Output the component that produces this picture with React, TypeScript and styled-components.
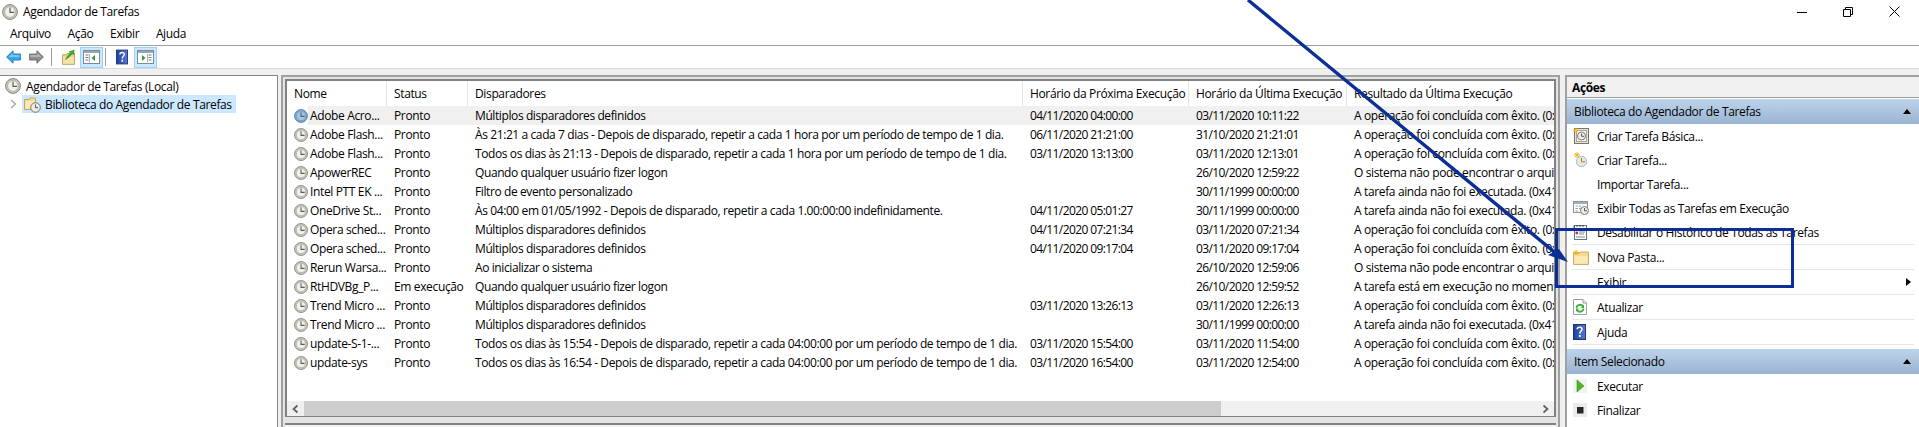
import React from "react";
import styled, { createGlobalStyle } from "styled-components";

const Global = createGlobalStyle`
  html, body { margin: 0; padding: 0; background: #fff; overflow: hidden; }
  * { box-sizing: border-box; }
`;

const Root = styled.div`
  position: relative;
  width: 1919px;
  height: 427px;
  overflow: hidden;
  background: #fff;
  color: #000;
  font-family: "Open Sans", "Noto Sans", sans-serif;
  font-size: 12px;
  letter-spacing: -0.36px;
  display: flex;
  flex-direction: column;
`;

const TitleBar = styled.div`
  height: 23px;
  flex: none;
  display: flex;
  align-items: center;
  padding-left: 2px;
  gap: 5px;
`;
const TitleText = styled.span`
  flex: 1;
  line-height: 23px;
`;
const WinButtons = styled.div`
  display: flex;
  align-items: center;
  padding-right: 19px;
  gap: 36px;
`;
const MenuBar = styled.div`
  height: 23px;
  flex: none;
  display: flex;
  align-items: center;
  padding-left: 10px;
  gap: 16.7px;
  border-bottom: 1px solid #a0a0a0;
`;
const MenuItem = styled.span`
  line-height: 20px;
`;
const Toolbar = styled.div`
  height: 23px;
  flex: none;
  display: flex;
  align-items: center;
  padding-left: 5px;
  border-bottom: 1px solid #d9d9d9;
`;
const ToolIcon = styled.div<{ $w: number; $on?: boolean; $ml?: number }>`
  width: ${(p) => p.$w}px;
  height: 21px;
  margin-left: ${(p) => p.$ml ?? 0}px;
  display: flex;
  align-items: center;
  justify-content: center;
  background: ${(p) => (p.$on ? "#cce8ff" : "transparent")};
  border: 1px solid ${(p) => (p.$on ? "#99d1ff" : "transparent")};
`;
const ToolSep = styled.div<{ $ml: number; $mr: number }>`
  width: 1px;
  height: 18px;
  background: #a0a0a0;
  margin: 0 ${(p) => p.$mr}px 0 ${(p) => p.$ml}px;
`;

const Workspace = styled.div`
  flex: 1;
  min-height: 0;
  display: flex;
  padding-top: 6px;
  background: #f0f0f0;
`;

const TreePanel = styled.div`
  width: 278px;
  flex: none;
  background: #fff;
  border: 1px solid #828790;
  border-left: 0;
  border-bottom: 0;
  padding-top: 1px;
`;
const TreeRoot = styled.div`
  height: 18px;
  display: flex;
  align-items: center;
  padding-left: 5px;
  gap: 5px;
`;
const TreeChild = styled.div`
  display: flex;
  align-items: center;
`;
const Chevron = styled.div`
  width: 22px;
  display: flex;
  justify-content: center;
  padding-left: 4px;
`;
const TreeSelected = styled.div`
  width: 214px;
  height: 18px;
  background: #cce8ff;
  display: flex;
  align-items: center;
  padding-left: 2px;
  gap: 4px;
`;

const CenterFrame = styled.div`
  margin-left: 3px;
  width: 279px;
  flex: 1;
  min-width: 0;
  border: solid #a0a0a0;
  border-width: 2px 2px 0 2px;
  padding: 2px 2px 0 2px;
  background: #e4e4e4;
  display: flex;
  flex-direction: column;
  gap: 6px;
`;
const ListPane = styled.div`
  height: 338px;
  flex: none;
  background: #fff;
  border: 2px solid #828282;
  border-bottom-width: 1px;
  display: flex;
  flex-direction: column;
`;
const DetailPane = styled.div`
  flex: 1;
  background: #f4f4f4;
  border-top: 2px solid #828282;
`;
const Cols = "100px 81px 555px 166px 158px 1fr";
const HeaderRow = styled.div`
  height: 25px;
  flex: none;
  display: grid;
  grid-template-columns: ${Cols};
`;
const HeaderCell = styled.div`
  padding-left: 7px;
  line-height: 25px;
  white-space: nowrap;
  overflow: hidden;
  border-right: 1px solid #e5e5e5;
  &:last-child { border-right: 0; }
`;
const Rows = styled.div`
  flex: 1;
  min-height: 0;
`;
const Row = styled.div<{ $selected?: boolean }>`
  height: 19px;
  display: grid;
  grid-template-columns: ${Cols};
  background: ${(p) => (p.$selected ? "linear-gradient(to right, #fff 21px, #f0f0f0 21px)" : "#fff")};
`;
const NameCell = styled.div`
  display: flex;
  align-items: center;
  padding-left: 7px;
  gap: 2px;
  white-space: nowrap;
  line-height: 19px;
`;
const Cell = styled.div<{ $spacing?: number }>`
  padding-left: 7px;
  white-space: nowrap;
  overflow: hidden;
  line-height: 19px;
  letter-spacing: ${(p) => p.$spacing ?? -0.36}px;
`;
const HScroll = styled.div`
  height: 15px;
  flex: none;
  display: flex;
  align-items: stretch;
  background: #f0f0f0;
`;
const ScrollBtn = styled.div`
  width: 17px;
  flex: none;
  display: flex;
  align-items: center;
  justify-content: center;
`;
const ScrollThumb = styled.div`
  width: 917px;
  flex: none;
  background: #cdcdcd;
`;
const ScrollTrack = styled.div`
  flex: 1;
`;

const ActionsPanel = styled.div`
  width: 354px;
  margin-left: 5px;
  flex: none;
  background: #fff;
  border: solid #a0a0a0;
  border-width: 2px 0 0 2px;
`;
const ActionsHead = styled.div`
  height: 21px;
  padding-left: 5px;
  background: #f0f0f0;
  border-bottom: 1px solid #a0a0a0;
  font-weight: 700;
  line-height: 21px;
`;
const Section = styled.div<{ $mt: number }>`
  height: 25px;
  margin-top: ${(p) => p.$mt}px;
  padding: 0 8px 0 7px;
  display: flex;
  align-items: center;
  justify-content: space-between;
  background: linear-gradient(to bottom, #bdd4ea, #9ab3d2);
`;
const SectionArrow = styled.div`
  width: 0;
  height: 0;
  border-left: 4.5px solid transparent;
  border-right: 4.5px solid transparent;
  border-bottom: 5px solid #000;
`;
const Action = styled.div<{ $sep?: boolean }>`
  height: ${(p) => (p.$sep ? 25 : 24)}px;
  margin: 0 5px;
  padding: 0 0 0 1px;
  display: flex;
  align-items: center;
  border-bottom: ${(p) => (p.$sep ? "1px solid #e6e6e6" : "0")};
`;
const ActionIcon = styled.div`
  width: 24px;
  flex: none;
  display: flex;
  align-items: center;
`;
const ActionLabel = styled.span`
  flex: 1;
  white-space: nowrap;
`;
const SubArrow = styled.div`
  width: 0;
  height: 0;
  margin-right: 3px;
  border-top: 4.5px solid transparent;
  border-bottom: 4.5px solid transparent;
  border-left: 5px solid #000;
`;

const Mark = styled.div`
  position: absolute;
  left: 1555px;
  top: 228px;
  width: 239px;
  height: 60px;
  border: 3px solid #0b2f95;
  pointer-events: none;
`;
const ArrowLayer = styled.svg`
  position: absolute;
  left: 0;
  top: 0;
  pointer-events: none;
`;

const Clock = ({ size = 14, blue = false }: { size?: number; blue?: boolean }) => (
  <svg width={size} height={size} viewBox="0 0 16 16" style={{ flex: "none" }}>
    <circle cx="8" cy="8" r="7.4" fill={blue ? "#7ea6cb" : "#c9c7c0"} stroke={blue ? "#5a83a8" : "#85847f"} strokeWidth="1" />
    <circle cx="8" cy="8" r="5.4" fill={blue ? "#a7c4de" : "#f2f0ea"} stroke={blue ? "#6f97bc" : "#a5a39b"} strokeWidth="0.7" />
    <path d="M8 3.6V8.4H12.2" fill="none" stroke={blue ? "#3f668b" : "#5e5d58"} strokeWidth="1.2" />
  </svg>
);

const NavArrow = ({ color, edge, dir }: { color: string; edge: string; dir: "l" | "r" }) => (
  <svg width="17" height="16" viewBox="0 0 17 16" style={dir === "r" ? { transform: "scaleX(-1)" } : undefined}>
    <path d="M0.7 8L8 1V4.6H16.3V11.4H8V15Z" fill={color} stroke={edge} strokeWidth="1" />
    <path d="M3 8L7.5 3.6V5.6H15.4V8Z" fill="#fff" opacity="0.35" />
  </svg>
);

const FolderUp = () => (
  <svg width="15" height="18" viewBox="0 0 15 18">
    <path d="M0.5 6.5H5L6 5H14.5V17.5H0.5Z" fill="#eed58f" stroke="#b49a5b" />
    <path d="M1.5 9H13.5V16.5H1.5Z" fill="#f7e3a8" />
    <path d="M4 12C6 8 8 6 10 4.5L8.3 3L14 1L13.7 6.5L12 5.2C10 7.5 7.5 10 4 12Z" fill="#3fae2a" stroke="#2a8a1b" strokeWidth="0.6" />
  </svg>
);

const PaneIcon = ({ dark, side }: { dark: string; side: "l" | "r" }) => (
  <svg width="17" height="14" viewBox="0 0 17 14">
    <rect x="0.5" y="0.5" width="16" height="13" fill="#fff" stroke="#7f8a96" />
    <rect x="1" y="1" width="15" height="2" fill="#9aa5b1" />
    {side === "l" ? (
      <>
        <path d="M2.5 5H5.5M2.5 7.5H5.5M2.5 10H5.5" stroke="#6b7785" />
        <path d="M12 5V11L8.5 8Z" fill={dark} />
      </>
    ) : (
      <>
        <path d="M11.5 5H14.5M11.5 7.5H14.5M11.5 10H14.5" stroke="#6b7785" />
        <path d="M5 5V11L8.5 8Z" fill={dark} />
      </>
    )}
    <path d={side === "l" ? "M6.5 4V12.5" : "M10.5 4V12.5"} stroke="#aab2bb" />
  </svg>
);

const HelpBook = ({ w = 13, h = 16 }: { w?: number; h?: number }) => (
  <svg width={w} height={h} viewBox="0 0 13 16">
    <defs>
      <linearGradient id="hb" x1="0" y1="0" x2="1" y2="0">
        <stop offset="0" stopColor="#1d3f9c" />
        <stop offset="1" stopColor="#5a78cf" />
      </linearGradient>
    </defs>
    <rect x="0.5" y="0.5" width="12" height="15" fill="url(#hb)" stroke="#1c3480" />
    <path d="M4.2 5.2C4.2 2.6 9 2.4 9 5.2C9 7 6.9 7.2 6.8 9.6" fill="none" stroke="#fff" strokeWidth="1.5" />
    <rect x="5.9" y="11" width="1.8" height="2" fill="#fff" />
  </svg>
);

const RootFolder = () => (
  <svg width="17" height="17" viewBox="0 0 17 17" style={{ flex: "none" }}>
    <path d="M0.5 3.5H5L6 2H11.5V13.5H0.5Z" fill="#f5dc96" stroke="#c2a765" />
    <path d="M1.5 5H10.5V12.5H1.5Z" fill="#fbeab5" />
    <circle cx="11.5" cy="11.5" r="4.8" fill="#eceae3" stroke="#77766f" />
    <path d="M11.5 8.5V11.7H14" fill="none" stroke="#55544f" />
  </svg>
);

const StarClockPage = () => (
  <svg width="16" height="16" viewBox="0 0 16 16">
    <rect x="1.5" y="0.5" width="14" height="15" fill="#e9e3d3" stroke="#7a7368" />
    <rect x="3.5" y="2.5" width="10" height="11" fill="#fafafa" stroke="#a8a297" />
    <circle cx="8.5" cy="8" r="4" fill="#f2f0ea" stroke="#7d7c76" />
    <path d="M8.5 5.5V8.3H11" fill="none" stroke="#55544f" />
    <path d="M0 2.5H6M3 0V5M1 0.5L5 4.5M5 0.5L1 4.5" stroke="#f3b418" />
  </svg>
);

const StarClock = () => (
  <svg width="16" height="16" viewBox="0 0 16 16">
    <circle cx="8.5" cy="9.5" r="5.2" fill="#e9e7df" stroke="#a0bcd8" />
    <path d="M8.5 6V9.8H12" fill="none" stroke="#b47a2a" />
    <path d="M1 3H7M4 0V6M2 1L6 5M6 1L2 5" stroke="#f3b418" />
  </svg>
);

const ListClock = () => (
  <svg width="16" height="14" viewBox="0 0 16 14">
    <rect x="0.5" y="0.5" width="14" height="11" fill="#fff" stroke="#8b96a3" />
    <rect x="1" y="1" width="13" height="2" fill="#a4aebb" />
    <path d="M2.5 5H5M6 5H8M2.5 7.5H5M6 7.5H8M2.5 10H5" stroke="#98a1ac" />
    <circle cx="11.5" cy="9.5" r="4" fill="#ecebe4" stroke="#7d7c76" />
    <path d="M11.5 7V9.8H14" fill="none" stroke="#55544f" />
  </svg>
);

const HistoryIcon = () => (
  <svg width="14" height="16" viewBox="0 0 14 16">
    <rect x="1.5" y="1.5" width="12" height="14" fill="#fff" stroke="#67727f" />
    <path d="M1 1.5V4M4 1V3M7 1V3M10 1V3" stroke="#3c4752" />
    <path d="M3 5H11M6 8H12M6 10H11M3 13H12" stroke="#7a8794" />
    <circle cx="3.8" cy="9" r="1.4" fill="#d62828" />
  </svg>
);

const NewFolder = () => (
  <svg width="16" height="15" viewBox="0 0 16 15">
    <path d="M0.5 3.5H5.5L7 2H15.5V14.5H0.5Z" fill="#f3d993" stroke="#c9ae6c" />
    <path d="M1.5 6H14.5V13.5H1.5Z" fill="#fbe9b3" />
    <path d="M0 2.5H6M3 0V5M1 0.5L5 4.5M5 0.5L1 4.5" stroke="#f5b312" />
  </svg>
);

const RefreshPage = () => (
  <svg width="14" height="16" viewBox="0 0 14 16">
    <path d="M0.5 0.5H10L13.5 4V15.5H0.5Z" fill="#fff" stroke="#9aa0a6" />
    <path d="M10 0.5V4H13.5" fill="#e8e8e8" stroke="#9aa0a6" />
    <path d="M3.5 9A3.5 3.5 0 0 1 10 7.5M10.5 9.5A3.5 3.5 0 0 1 4 11" fill="none" stroke="#3dae3a" strokeWidth="1.8" />
    <path d="M11 5.5V9H7.8ZM3 12.8V9.5H6.2Z" fill="#3dae3a" />
  </svg>
);

const PlayIcon = () => (
  <svg width="14" height="14" viewBox="0 0 14 14">
    <rect width="14" height="14" fill="#f2f2f2" />
    <path d="M4 1V13L11 7Z" fill="#4fb81f" stroke="#3a9415" strokeWidth="0.6" />
  </svg>
);

const StopIcon = () => (
  <svg width="14" height="14" viewBox="0 0 14 14">
    <rect width="14" height="14" fill="#ececec" />
    <rect x="4" y="4" width="6.5" height="6.5" fill="#262626" />
  </svg>
);

const Small = ({ d }: { d: string }) => (
  <svg width="9" height="10" viewBox="0 0 9 10">
    <path d={d} fill="none" stroke="#606060" strokeWidth="1.7" />
  </svg>
);

const OK = "A operação foi concluída com êxito. (0x0)";
const NF = "O sistema não pode encontrar o arquivo especificado. (0x80070002)";
const NR = "A tarefa ainda não foi executada. (0x41303)";
const RN = "A tarefa está em execução no momento. (0x41301)";
const MULTI = "Múltiplos disparadores definidos";
const LOGON = "Quando qualquer usuário fizer logon";

const tasks: string[][] = [
  ["Adobe Acro...", "Pronto", MULTI, "04/11/2020 04:00:00", "03/11/2020 10:11:22", OK],
  ["Adobe Flash...", "Pronto", "Às 21:21 a cada 7 dias - Depois de disparado, repetir a cada 1 hora por um período de tempo de 1 dia.", "06/11/2020 21:21:00", "31/10/2020 21:21:01", OK],
  ["Adobe Flash...", "Pronto", "Todos os dias às 21:13 - Depois de disparado, repetir a cada 1 hora por um período de tempo de 1 dia.", "03/11/2020 13:13:00", "03/11/2020 12:13:01", OK],
  ["ApowerREC", "Pronto", LOGON, "", "26/10/2020 12:59:22", NF],
  ["Intel PTT EK ...", "Pronto", "Filtro de evento personalizado", "", "30/11/1999 00:00:00", NR],
  ["OneDrive St...", "Pronto", "Às 04:00 em 01/05/1992 - Depois de disparado, repetir a cada 1.00:00:00 indefinidamente.", "04/11/2020 05:01:27", "30/11/1999 00:00:00", NR],
  ["Opera sched...", "Pronto", MULTI, "04/11/2020 07:21:34", "03/11/2020 07:21:34", OK],
  ["Opera sched...", "Pronto", MULTI, "04/11/2020 09:17:04", "03/11/2020 09:17:04", OK],
  ["Rerun Warsa...", "Pronto", "Ao inicializar o sistema", "", "26/10/2020 12:59:06", NF],
  ["RtHDVBg_P...", "Em execução", LOGON, "", "26/10/2020 12:59:52", RN],
  ["Trend Micro ...", "Pronto", MULTI, "03/11/2020 13:26:13", "03/11/2020 12:26:13", OK],
  ["Trend Micro ...", "Pronto", MULTI, "", "30/11/1999 00:00:00", NR],
  ["update-S-1-...", "Pronto", "Todos os dias às 15:54 - Depois de disparado, repetir a cada 04:00:00 por um período de tempo de 1 dia.", "03/11/2020 15:54:00", "03/11/2020 11:54:00", OK],
  ["update-sys", "Pronto", "Todos os dias às 16:54 - Depois de disparado, repetir a cada 04:00:00 por um período de tempo de 1 dia.", "03/11/2020 16:54:00", "03/11/2020 12:54:00", OK],
];

const heads = ["Nome", "Status", "Disparadores", "Horário da Próxima Execução", "Horário da Última Execução", "Resultado da Última Execução"];

const spacingFor = (col: number) => (col === 1 ? -0.4 : col === 2 || col === 3 ? -0.6 : -0.36);

export default function App() {
  return (
    <Root>
      <Global />
      <TitleBar>
        <Clock size={16} />
        <TitleText>Agendador de Tarefas</TitleText>
        <WinButtons>
          <svg width="10" height="10" viewBox="0 0 10 10"><path d="M0 5.5H10" stroke="#000" /></svg>
          <svg width="10" height="10" viewBox="0 0 10 10"><path d="M2.5 2.5V0.5H9.5V7.5H7.5M0.5 2.5H7.5V9.5H0.5Z" fill="none" stroke="#000" /></svg>
          <svg width="11" height="11" viewBox="0 0 11 11"><path d="M0.5 0.5L10.5 10.5M10.5 0.5L0.5 10.5" stroke="#000" /></svg>
        </WinButtons>
      </TitleBar>
      <MenuBar>
        <MenuItem>Arquivo</MenuItem>
        <MenuItem>Ação</MenuItem>
        <MenuItem>Exibir</MenuItem>
        <MenuItem>Ajuda</MenuItem>
      </MenuBar>
      <Toolbar>
        <ToolIcon $w={17}><NavArrow dir="l" color="#3aa6ec" edge="#1a74b8" /></ToolIcon>
        <ToolIcon $w={17} $ml={6}><NavArrow dir="r" color="#8e8e8e" edge="#666" /></ToolIcon>
        <ToolSep $ml={6} $mr={9} />
        <ToolIcon $w={15}><FolderUp /></ToolIcon>
        <ToolIcon $w={23} $on $ml={4}><PaneIcon side="l" dark="#2f9e35" /></ToolIcon>
        <ToolSep $ml={2} $mr={9} />
        <ToolIcon $w={14}><HelpBook /></ToolIcon>
        <ToolIcon $w={23} $on $ml={5}><PaneIcon side="r" dark="#2f9e35" /></ToolIcon>
      </Toolbar>
      <Workspace>
        <TreePanel>
          <TreeRoot>
            <Clock size={16} />
            <span>Agendador de Tarefas (Local)</span>
          </TreeRoot>
          <TreeChild>
            <Chevron>
              <svg width="7" height="10" viewBox="0 0 7 10"><path d="M1 1L5.5 5L1 9" fill="none" stroke="#a6a6a6" strokeWidth="1.4" /></svg>
            </Chevron>
            <TreeSelected>
              <RootFolder />
              <span>Biblioteca do Agendador de Tarefas</span>
            </TreeSelected>
          </TreeChild>
        </TreePanel>
        <CenterFrame>
          <ListPane>
            <HeaderRow>
              {heads.map((h) => (
                <HeaderCell key={h}>{h}</HeaderCell>
              ))}
            </HeaderRow>
            <Rows>
              {tasks.map((t, i) => (
                <Row key={i} $selected={i === 0}>
                  <NameCell>
                    <Clock size={14} blue={i === 0} />
                    <span>{t[0]}</span>
                  </NameCell>
                  {t.slice(1).map((c, j) => (
                    <Cell key={j} $spacing={spacingFor(j)}>{c}</Cell>
                  ))}
                </Row>
              ))}
            </Rows>
            <HScroll>
              <ScrollBtn><Small d="M6.5 1.5L2.5 5L6.5 8.5" /></ScrollBtn>
              <ScrollThumb />
              <ScrollTrack />
              <ScrollBtn><Small d="M2.5 1.5L6.5 5L2.5 8.5" /></ScrollBtn>
            </HScroll>
          </ListPane>
          <DetailPane />
        </CenterFrame>
        <ActionsPanel>
          <ActionsHead>Ações</ActionsHead>
          <Section $mt={1}>
            <span>Biblioteca do Agendador de Tarefas</span>
            <SectionArrow />
          </Section>
          <Action><ActionIcon><StarClockPage /></ActionIcon><ActionLabel>Criar Tarefa Básica...</ActionLabel></Action>
          <Action><ActionIcon><StarClock /></ActionIcon><ActionLabel>Criar Tarefa...</ActionLabel></Action>
          <Action><ActionIcon /><ActionLabel>Importar Tarefa...</ActionLabel></Action>
          <Action><ActionIcon><ListClock /></ActionIcon><ActionLabel>Exibir Todas as Tarefas em Execução</ActionLabel></Action>
          <Action $sep><ActionIcon><HistoryIcon /></ActionIcon><ActionLabel>Desabilitar o Histórico de Todas as Tarefas</ActionLabel></Action>
          <Action $sep><ActionIcon><NewFolder /></ActionIcon><ActionLabel>Nova Pasta...</ActionLabel></Action>
          <Action $sep><ActionIcon /><ActionLabel>Exibir</ActionLabel><SubArrow /></Action>
          <Action $sep><ActionIcon><RefreshPage /></ActionIcon><ActionLabel>Atualizar</ActionLabel></Action>
          <Action $sep><ActionIcon><HelpBook /></ActionIcon><ActionLabel>Ajuda</ActionLabel></Action>
          <Section $mt={4}>
            <span>Item Selecionado</span>
            <SectionArrow />
          </Section>
          <Action><ActionIcon><PlayIcon /></ActionIcon><ActionLabel>Executar</ActionLabel></Action>
          <Action><ActionIcon><StopIcon /></ActionIcon><ActionLabel>Finalizar</ActionLabel></Action>
        </ActionsPanel>
      </Workspace>
      <Mark />
      <ArrowLayer width="1919" height="427" viewBox="0 0 1919 427">
        <path d="M1248 0L1558 255" stroke="#0b2f95" strokeWidth="3.4" fill="none" />
        <path d="M1568 262L1548 255L1559 249Z" fill="#0b2f95" />
      </ArrowLayer>
    </Root>
  );
}
